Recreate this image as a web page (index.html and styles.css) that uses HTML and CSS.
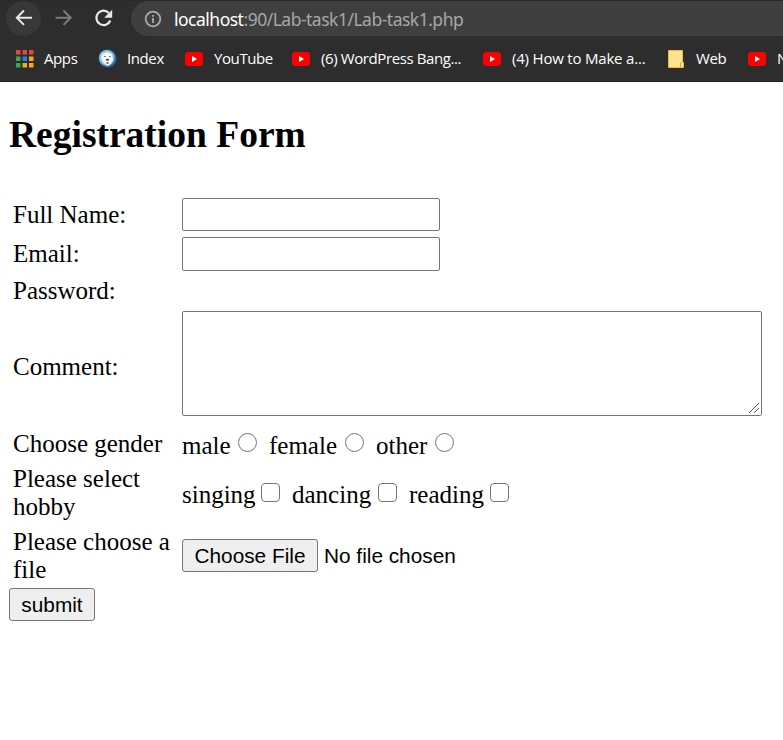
FILE: index.html
```html
<!DOCTYPE html>
<html lang="en">
<head>
<meta charset="utf-8">
<title>Registration Form</title>
<link rel="stylesheet" href="styles.css">
</head>
<body>
<header class="browser">
  <div class="toolbar">
    <span class="nav nav-back"><svg width="35" height="35" viewBox="0 0 35 35"><path d="M26 16.700H11M18 9.500l-7.200 7.200 7.200 7.200" fill="none" stroke="#e8e8e8" stroke-width="2"/></svg></span>
    <span class="nav nav-next"><svg width="35" height="35" viewBox="0 0 35 35"><path d="M9.500 16.700h15M17.500 9.500l7.200 7.200-7.200 7.200" fill="none" stroke="#7c7c7c" stroke-width="2"/></svg></span>
    <span class="nav"><svg width="35" height="35" viewBox="0 0 35 35"><path d="M22.800 11.900A7.200 7.200 0 1 0 24.300 19.500" fill="none" stroke="#e8e8e8" stroke-width="2.200"/><path d="M26.200 8.800v8h-8z" fill="#e8e8e8"/></svg></span>
    <div class="address">
      <svg class="info" width="18" height="18" viewBox="0 0 18 18"><circle cx="9" cy="9" r="7.300" fill="none" stroke="#a9abad" stroke-width="1.800"/><path d="M9 8v5M9 5v1.700" stroke="#a9abad" stroke-width="1.800"/></svg>
      <span class="url"><b>localhost</b>:90/Lab-task1/Lab-task1.php</span>
    </div>
  </div>
  <nav class="bookmarks">
    <span class="mark apps"><svg width="18" height="18" viewBox="0 0 18 18"><path fill="#e8453c" d="M0 0h4.500v4.500H0zM6.500 0H11v4.500H6.500zM13 0h4.500v4.500H13z"/><path fill="#34a853" d="M0 6.500h4.500V11H0zM0 13h4.500v4.500H0z"/><path fill="#1a84ee" d="M6.500 6.500H11V11H6.500z"/><path fill="#fbab0c" d="M13 6.500h4.500V11H13zM6.500 13H11v4.500H6.500zM13 13h4.500v4.500H13z"/></svg><span class="t">Apps</span></span>
    <span class="mark index"><svg width="19" height="19" viewBox="0 0 19 19"><circle cx="9.500" cy="9.500" r="9" fill="#2e6d9b"/><circle cx="8.800" cy="8.800" r="7.700" fill="#8fc4e2"/><path d="M4 5l5-2 5 2 1 6-3 5-3 1-4-4-2-4z" fill="#f3f7f8"/><path d="M6 7.500h2M11 7.500h2" stroke="#789" stroke-width="1"/><path d="M8 10h3v1.500H8z" fill="#333"/><path d="M8.500 13h2v2h-2z" fill="#93665c"/></svg><span class="t">Index</span></span>
    <span class="mark yt1"><svg class="yt" width="18" height="14" viewBox="0 0 18 14"><rect width="18" height="14" rx="3" fill="#f00"/><path d="M7 4l5 3-5 3z" fill="#fff"/></svg><span class="t">YouTube</span></span>
    <span class="mark yt2"><svg class="yt" width="18" height="14" viewBox="0 0 18 14"><rect width="18" height="14" rx="3" fill="#f00"/><path d="M7 4l5 3-5 3z" fill="#fff"/></svg><span class="t">(6) WordPress Bang...</span></span>
    <span class="mark yt3"><svg class="yt" width="18" height="14" viewBox="0 0 18 14"><rect width="18" height="14" rx="3" fill="#f00"/><path d="M7 4l5 3-5 3z" fill="#fff"/></svg><span class="t t-how">(4) How to Make a...</span></span>
    <span class="mark web"><svg width="17" height="18" viewBox="0 0 17 18"><path d="M.5.500h14v11l1 1v5H.5z" fill="#ffe48d" stroke="#dfbd4b"/><path d="M12.500 17v-4l2-1.500" fill="none" stroke="#cfab35"/></svg><span class="t">Web</span></span>
    <span class="mark yt4"><svg class="yt" width="18" height="14" viewBox="0 0 18 14"><rect width="18" height="14" rx="3" fill="#f00"/><path d="M7 4l5 3-5 3z" fill="#fff"/></svg><span class="t">N</span></span>
  </nav>
</header>
<main>
  <h1>Registration Form</h1>
  <form>
    <div class="fields">
      <label for="name">Full Name:</label>
      <div><input class="text" id="name" type="text"></div>
      <label for="email">Email:</label>
      <div><input class="text email" id="email" type="text"></div>
      <label>Password:</label>
      <div></div>
      <label class="low" for="comment">Comment:</label>
      <div class="comment"><textarea id="comment"></textarea><svg class="grip" width="10" height="10" viewBox="0 0 10 10"><path d="M0 10L10 0M5 10l5-5" stroke="#555" stroke-width="1"/></svg></div>
      <label>Choose gender</label>
      <div class="options gender">
        <span class="male">male<input class="choice round" type="radio" name="gender"></span>
        <span class="female">female<input class="choice round" type="radio" name="gender"></span>
        <span class="other">other<input class="choice round" type="radio" name="gender"></span>
      </div>
      <label class="two">Please select<br>hobby</label>
      <div class="options hobby">
        <span class="singing">singing<input class="choice" type="checkbox"></span>
        <span class="dancing">dancing<input class="choice" type="checkbox"></span>
        <span class="reading">reading<input class="choice" type="checkbox"></span>
      </div>
      <label>Please choose a<br>file</label>
      <div class="file"><button class="btn choose" type="button">Choose File</button><span>No file chosen</span></div>
    </div>
    <button class="btn submit" type="button">submit</button>
  </form>
</main>
</body>
</html>
```

FILE: styles.css
```css
* { box-sizing: border-box; }
body { margin: 0; background: #fff; color: #000; font: 25px/28px "Liberation Serif", serif; overflow: hidden; }

/* Browser chrome */
.browser { height: 82px; background: #2d2d2d; border-top: 1px solid #292929; border-bottom: 1px solid #202020; overflow: hidden; font-family: "Open Sans", sans-serif; }
.toolbar { display: flex; height: 35px; padding-left: 6px; }
.nav { width: 35px; height: 35px; margin-right: 5px; border-radius: 50%; }
.nav svg { display: block; }
.nav-back { background: #383838; }
.address { display: flex; align-items: center; flex: 1; margin-left: 5px; padding-left: 13px; border-radius: 18px 0 0 18px; background: #3f3f3f; }
.info { margin-right: 12px; }
.url { display: block; color: #a7a7a7; font: 17.500px/24px "Noto Sans", sans-serif; white-space: nowrap; letter-spacing: -.5px; }
.url b { color: #fff; font-weight: 400; }
.bookmarks { display: flex; height: 45px; align-items: center; padding-left: 16px; color: #fff; font-size: 15px; line-height: 20px; white-space: nowrap; }
.mark { display: flex; flex: none; align-items: center; }
.apps { width: 82px; gap: 10px; }
.index { width: 87px; gap: 10px; }
.yt1 { width: 107px; gap: 11px; }
.yt2 { width: 191px; gap: 11px; }
.yt3 { width: 185px; gap: 11px; }
.web { width: 80px; gap: 11px; }
.yt4 { gap: 11px; }
.t { letter-spacing: -.4px; padding-bottom: 2px; }
.t-how { letter-spacing: -.2px; }

/* Form */
main { padding-left: 9px; }
h1 { margin: 0; padding-top: 32px; height: 113px; font-size: 37.500px; line-height: 42px; }
.fields { display: grid; grid-template-columns: 169px 600px; grid-template-rows: 39px 40px 34px 116px 40px 60px 64px; align-items: center; padding-left: 4px; white-space: nowrap; }
input, textarea { display: block; margin: 0; padding: 2px; background: #fff; border: 1px solid #767676; border-radius: 2px; }
.text { width: 258px; height: 33px; appearance: none; }
.email { height: 34px; }
.low { padding-top: 2px; }
.comment { position: relative; align-self: start; width: 580px; padding-top: 3px; }
textarea { width: 580px; height: 105px; }
textarea::-webkit-resizer { background: #fff; }
.grip { position: absolute; right: 3px; bottom: 3px; pointer-events: none; }
.options { display: flex; }
.options span { display: flex; }
.choice { appearance: none; width: 19px; height: 19px; padding: 0; border: 1.500px solid #767676; border-radius: 4px; margin-left: auto; }
.round { border-radius: 50%; }
.gender { padding-top: 4px; }
.gender .choice { margin-top: 1px; }
.male { width: 75px; }
.female { width: 95px; margin-left: 12px; }
.other { width: 78px; margin-left: 12px; }
.hobby { padding-top: 2px; }
.hobby .choice { margin-top: 2px; }
.singing { width: 98px; }
.dancing { width: 105px; margin-left: 12px; }
.reading { width: 100px; margin-left: 12px; }
.two { padding-bottom: 2px; }
.btn { display: block; height: 33px; padding: 0; background: #efefef; border: 1px solid #767676; border-radius: 3px; color: #000; font: 20.800px/29px "Liberation Sans", sans-serif; }
.file { display: flex; align-items: center; gap: 6px; padding-bottom: 2px; font: 20.800px/31px "Liberation Sans", sans-serif; }
.choose { width: 136px; }
.submit { width: 86px; }
```
